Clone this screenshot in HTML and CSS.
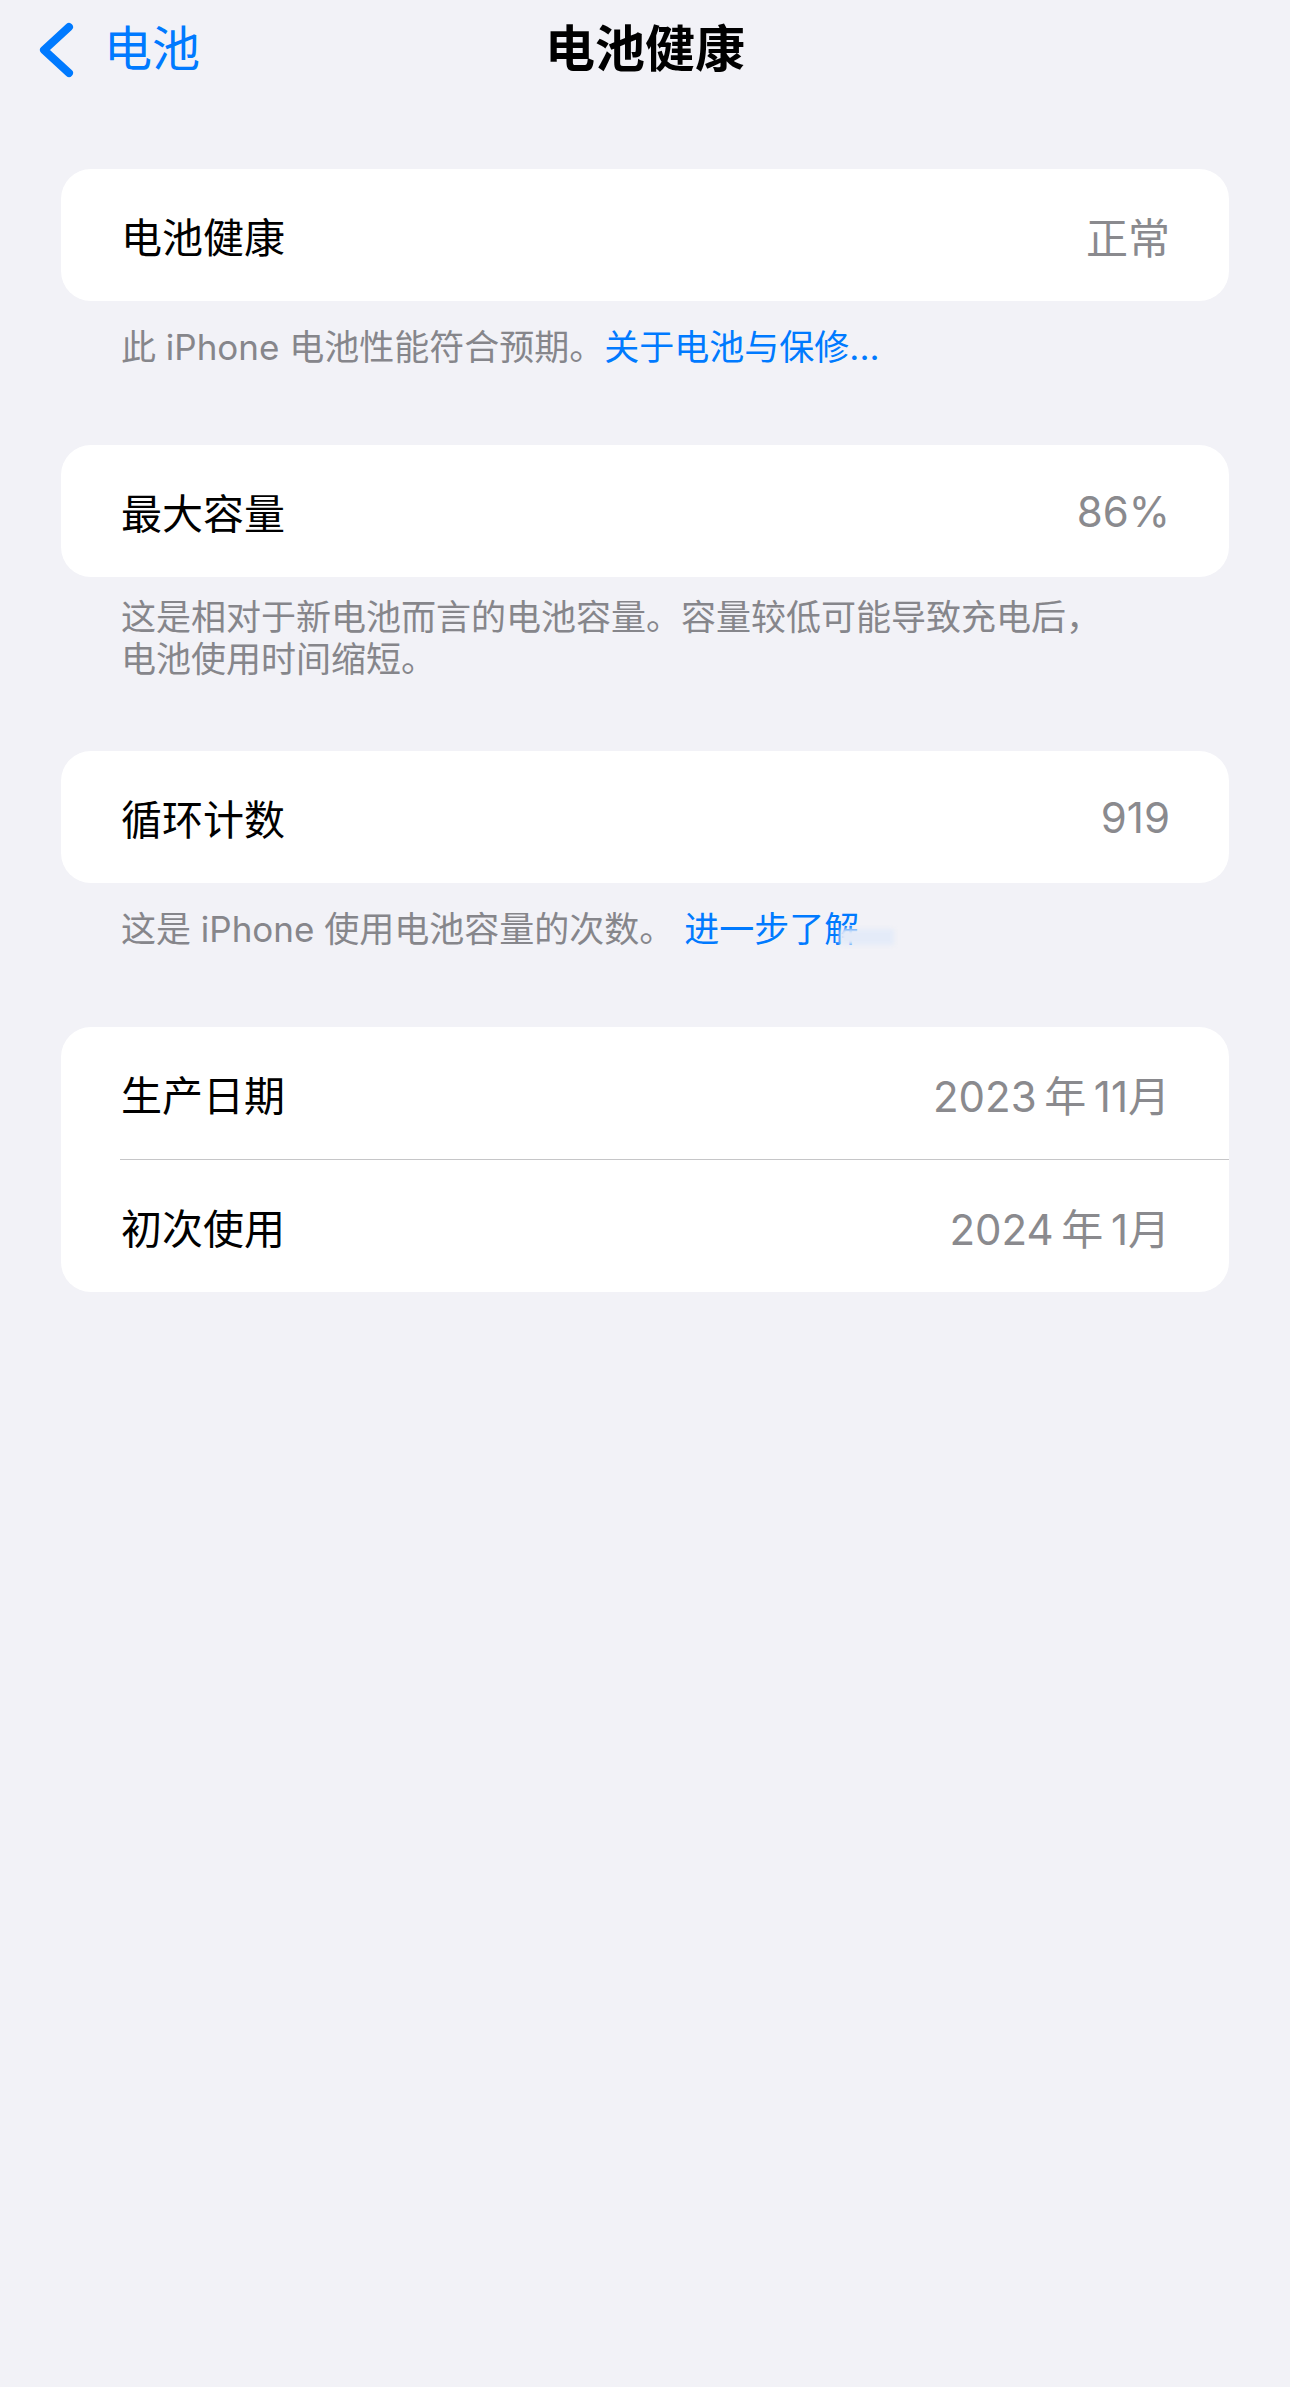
FILE: index.html
```html
<!DOCTYPE html>
<html lang="zh-CN">
<head>
    <meta charset="UTF-8">
    <meta name="viewport" content="width=device-width, initial-scale=1.0">
    <title>电池健康</title>
    <link rel="stylesheet" href="styles.css">
</head>

<body>
    <header class="nav">
        <a class="back" href="#">
            <svg class="chevron" width="40" height="62" viewBox="0 0 40 62">
                <path d="M32 8 L7 31 L32 54" fill="none" stroke="currentColor" stroke-width="8" stroke-linecap="round" stroke-linejoin="round"/>
            </svg>
            <span>电池</span>
        </a>
        <h1 class="title">电池健康</h1>
        <div></div>
    </header>

    <main>
        <section class="group">
            <div class="card">
                <div class="row">
                    <span class="label">电池健康</span>
                    <span class="value">正常</span>
                </div>
            </div>
            <p class="footer">此 iPhone 电池性能符合预期。<a href="#">关于电池与保修...</a></p>
        </section>

        <section class="group">
            <div class="card">
                <div class="row">
                    <span class="label">最大容量</span>
                    <span class="value">86%</span>
                </div>
            </div>
            <p class="footer footer-multi">这是相对于新电池而言的电池容量。容量较低可能导致充电后，<br>电池使用时间缩短。</p>
        </section>

        <section class="group">
            <div class="card">
                <div class="row">
                    <span class="label">循环计数</span>
                    <span class="value">919</span>
                </div>
            </div>
            <p class="footer">这是 iPhone 使用电池容量的次数。 <a href="#" class="smudge">进一步了解</a></p>
        </section>

        <section class="group">
            <div class="card">
                <div class="row">
                    <span class="label">生产日期</span>
                    <span class="value">2023&thinsp;年&thinsp;11月</span>
                </div>
                <div class="sep"></div>
                <div class="row">
                    <span class="label">初次使用</span>
                    <span class="value">2024&thinsp;年&thinsp;1月</span>
                </div>
            </div>
        </section>
    </main>
</body>
</html>
```

FILE: styles.css
```css
body {
    font-family: "Roboto", "Noto Sans CJK SC", sans-serif;
    background-color: #f2f2f7;
    color: #000;
    margin: 0;
    padding: 0;
    min-height: 2387px;
}

a {
    color: #007aff;
    text-decoration: none;
}

.nav {
    height: 100px;
    padding: 0 37px;
    display: grid;
    grid-template-columns: 1fr auto 1fr;
    align-items: center;
}

.back {
    display: flex;
    align-items: center;
    gap: 27px;
    font-size: 48px;
    line-height: 1;
}

.chevron {
    display: block;
}

.title {
    margin: 0;
    font-size: 50px;
    font-weight: 700;
    line-height: 1;
}

main {
    padding-top: 69px;
}

.card {
    background: #fff;
    border-radius: 30px;
    margin: 0 61px;
}

.row {
    height: 132px;
    padding: 0 59px 0 60px;
    display: flex;
    justify-content: space-between;
    align-items: center;
    font-size: 42px;
}

.label {
    font-size: 41px;
}

.value {
    font-family: "Inter", "Noto Sans CJK SC", sans-serif;
    color: #8a8a8e;
}

.sep {
    height: 1px;
    margin-left: 59px;
    background: #c6c6c8;
}

.footer {
    margin: 0 0 77px;
    padding: 25px 60px 0 121px;
    font-family: "Inter", "Noto Sans CJK SC", sans-serif;
    font-size: 35px;
    line-height: 42px;
    color: #86868b;
}

/* zweizeilige Fußnote sitzt etwas höher */
.footer-multi {
    padding-top: 19px;
    margin-bottom: 71px;
}

/* verwischte Stelle hinter "进一步了解" */
.smudge {
    position: relative;
}

.smudge::after {
    content: "";
    position: absolute;
    left: 156px;
    top: 21px;
    width: 54px;
    height: 16px;
    background: #e4ebf8;
    filter: blur(2px);
}
```
